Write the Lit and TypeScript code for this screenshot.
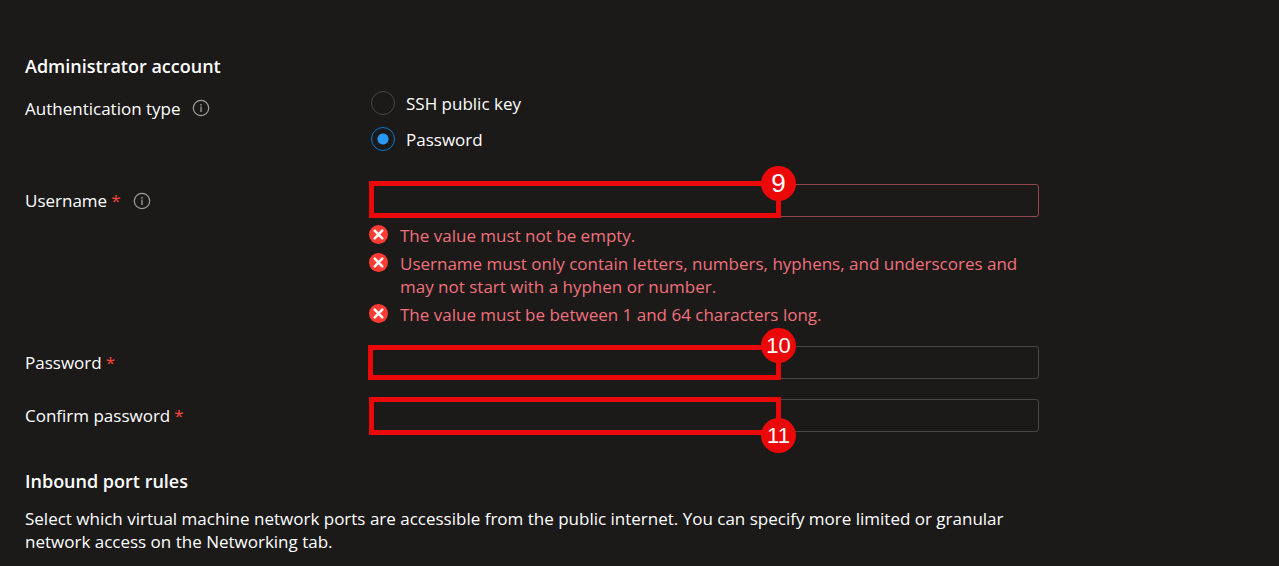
import { LitElement, html, css, nothing } from "lit";
import { customElement, property, state } from "lit/decorators.js";

@customElement("info-icon")
class InfoIcon extends LitElement {
  static styles = css`
    :host { display: inline-flex; }
    svg { display: block; }
  `;
  render() {
    return html`<svg width="18" height="18" viewBox="0 0 18 18" fill="none" stroke="#a19f9d" aria-hidden="true">
      <circle cx="9" cy="9" r="7.7" stroke-width="1.2" />
      <path d="M9 7.6V13" stroke-width="1.3" />
      <path d="M9 5V6.4" stroke-width="1.4" />
    </svg>`;
  }
}

@customElement("form-field")
class FormField extends LitElement {
  @property() label = "";
  @property() name = "";
  @property() type = "text";
  @property() step = "";
  @property({ type: Boolean }) info = false;
  @property({ attribute: false }) errors: string[] = [];

  static styles = css`
    * { box-sizing: border-box; }
    :host { display: grid; grid-template-columns: 344px minmax(0, 1fr); align-items: start; }
    .caption { display: flex; align-items: center; height: 33px; }
    .star { color: #ff453a; margin-left: 4px; }
    info-icon { margin-left: 12px; }
    .box { position: relative; }
    .input {
      display: block; width: 100%; height: 33px; padding: 0 10px;
      border: 1px solid #484644; border-radius: 3px; outline: none;
      background: transparent; color: inherit; font: inherit;
    }
    .input.invalid { border-color: #93474b; }
    .mark {
      position: absolute; left: 0; top: -3px; width: 412px; height: 37px;
      border: 5px solid #eb0808; pointer-events: none;
    }
    .mark.s10 { left: -1px; top: -1px; width: 413px; height: 35px; }
    .mark.s11 { top: -2px; height: 38px; }
    .badge {
      position: absolute; right: -20px; top: -20px; width: 35px; height: 35px;
      display: flex; align-items: center; justify-content: center;
      border-radius: 50%; background: #eb0808; color: #fff;
      font: 22px/35px "Liberation Sans", Arial, sans-serif;
    }
    .s9 .badge { font-size: 26px; }
    .s10 .badge { top: -22px; }
    .s11 .badge { top: auto; bottom: -23px; }
    .errors { list-style: none; margin: 7px 0 0; padding: 0; display: grid; gap: 5px; color: #f1707b; }
    .error { display: grid; grid-template-columns: 19px minmax(0, 1fr); column-gap: 12px; line-height: 23px; }
    .cross { display: block; margin-top: 1px; }
  `;

  private cross() {
    return html`<svg class="cross" width="19" height="19" viewBox="0 0 19 19" aria-hidden="true">
      <circle cx="9.5" cy="9.5" r="9.5" fill="#ff3b33" />
      <path d="M5.7 5.7L13.3 13.3M13.3 5.7L5.7 13.3" stroke="#fff" stroke-width="2.5" stroke-linecap="round" />
    </svg>`;
  }

  render() {
    const bad = this.errors.length > 0;
    return html`
      <div class="caption">
        <label for="field">${this.label}</label><span class="star">*</span>
        ${this.info ? html`<info-icon></info-icon>` : nothing}
      </div>
      <div>
        <div class="box">
          <input id="field" class="input ${bad ? "invalid" : ""}" type=${this.type} name=${this.name} required />
          <div class="mark s${this.step}"><span class="badge">${this.step}</span></div>
        </div>
        ${bad
          ? html`<ul class="errors">
              ${this.errors.map((e) => html`<li class="error">${this.cross()}<span>${e}</span></li>`)}
            </ul>`
          : nothing}
      </div>
    `;
  }
}

@customElement("app-root")
class AppRoot extends LitElement {
  @state() private auth = "password";

  private usernameErrors = [
    "The value must not be empty.",
    "Username must only contain letters, numbers, hyphens, and underscores and may not start with a hyphen or number.",
    "The value must be between 1 and 64 characters long.",
  ];

  static styles = css`
    * { box-sizing: border-box; }
    :host {
      display: block; min-height: 100vh; background: #1b1a19; color: #fff;
      font: 17px/23px "Segoe UI", "Open Sans", "Noto Sans", sans-serif;
    }
    .page { max-width: 1065px; padding: 55px 26px 12px 25px; }
    .heading { margin: 0; font-size: 18px; line-height: 23px; font-weight: 600; }
    .auth {
      display: grid; grid-template-columns: 344px minmax(0, 1fr);
      margin: 13px 0 33px; align-items: start;
    }
    .caption { display: flex; align-items: center; gap: 11px; height: 34px; }
    .options { display: grid; gap: 12px; padding-left: 2px; }
    .option { display: flex; align-items: center; gap: 11px; height: 24px; }
    .radio {
      appearance: none; width: 24px; height: 24px; margin: 0;
      border: 1px solid #484644; border-radius: 50%; background: transparent;
    }
    .radio:checked {
      border-color: #0078d4;
      background: radial-gradient(circle, #2899f5 5px, transparent 6px);
    }
    .fields { display: grid; gap: 20px; }
    .inbound { margin-top: 38px; }
    .text { margin: 14px 0 0; }
  `;

  private option(value: string, text: string) {
    return html`<label class="option">
      <input class="radio" type="radio" name="auth" .checked=${this.auth === value}
        @change=${() => (this.auth = value)} />
      <span>${text}</span>
    </label>`;
  }

  render() {
    return html`<main class="page">
      <h2 class="heading">Administrator account</h2>
      <div class="auth" role="radiogroup" aria-labelledby="auth-label">
        <div class="caption"><span id="auth-label">Authentication type</span><info-icon></info-icon></div>
        <div class="options">
          ${this.option("ssh", "SSH public key")}
          ${this.option("password", "Password")}
        </div>
      </div>
      <div class="fields">
        <form-field label="Username" name="username" step="9" info .errors=${this.usernameErrors}></form-field>
        <form-field label="Password" name="password" type="password" step="10"></form-field>
        <form-field label="Confirm password" name="confirm" type="password" step="11"></form-field>
      </div>
      <h2 class="heading inbound">Inbound port rules</h2>
      <p class="text">
        Select which virtual machine network ports are accessible from the public internet. You can specify more limited
        or granular network access on the Networking tab.
      </p>
    </main>`;
  }
}
